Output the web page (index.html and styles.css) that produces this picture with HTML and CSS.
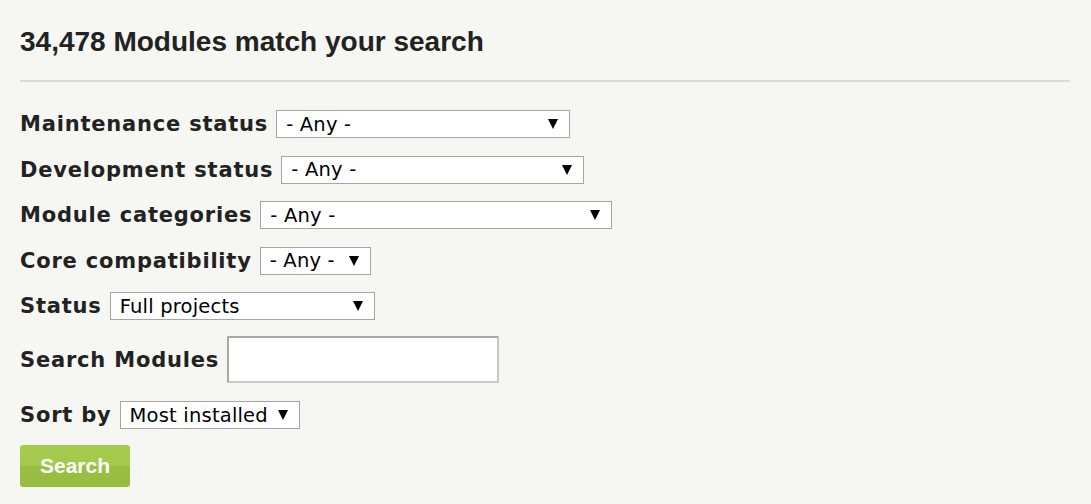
FILE: index.html
```html
<!DOCTYPE html>
<html>
<head>
<meta charset="utf-8">
<link rel="stylesheet" href="styles.css">
</head>
<body>
<div class="page">
  <h2 class="title">34,478 Modules match your search</h2>
  <form class="filters">
    <div class="row">
      <label class="lbl">Maintenance status</label>
      <span class="sel w-maint"><select><option>- Any -</option></select></span>
    </div>
    <div class="row">
      <label class="lbl">Development status</label>
      <span class="sel w-dev"><select><option>- Any -</option></select></span>
    </div>
    <div class="row">
      <label class="lbl">Module categories</label>
      <span class="sel w-cat"><select><option>- Any -</option></select></span>
    </div>
    <div class="row">
      <label class="lbl">Core compatibility</label>
      <span class="sel w-core"><select><option>- Any -</option></select></span>
    </div>
    <div class="row">
      <label class="lbl">Status</label>
      <span class="sel w-status"><select><option>Full projects</option></select></span>
    </div>
    <div class="row row-text">
      <label class="lbl">Search Modules</label>
      <input class="text" type="text">
    </div>
    <div class="row">
      <label class="lbl">Sort by</label>
      <span class="sel w-sort"><select><option>Most installed</option></select></span>
    </div>
    <div class="actions">
      <button class="btn" type="button">Search</button>
    </div>
  </form>
</div>
</body>
</html>
```
FILE: styles.css
```css
html, body {
  margin: 0;
  padding: 0;
  background: #f6f6f2;
}
.page {
  padding: 20px 21px 0 20px;
  font-family: "DejaVu Sans", Verdana, sans-serif;
  color: #222;
}
.title {
  margin: 0;
  padding-top: 8px;
  font-family: "Liberation Sans", Arial, sans-serif;
  font-weight: bold;
  font-size: 28px;
  line-height: 28px;
  color: #222;
  padding-bottom: 24px;
  border-bottom: 2px solid #dddcd5;
}
.filters {
  display: flex;
  flex-direction: column;
  padding-top: 28px;
}
.row {
  display: flex;
  align-items: center;
  gap: 8px;
  height: 28px;
  margin-bottom: 17.5px;
}
.row-text {
  height: 47px;
  margin-top: -1.5px;
  margin-bottom: 18px;
}
.lbl {
  font-weight: bold;
  font-size: 21px;
  letter-spacing: 0.8px;
  color: #222;
  white-space: nowrap;
}
.sel {
  position: relative;
  display: inline-block;
  height: 28px;
}
.sel select {
  appearance: none;
  -webkit-appearance: none;
  width: 100%;
  height: 28px;
  box-sizing: border-box;
  border: 1px solid #a5a5a5;
  border-radius: 0;
  background: #fff;
  font-family: "DejaVu Sans", Verdana, sans-serif;
  font-size: 19.5px;
  letter-spacing: 0.2px;
  color: #000;
  padding: 0 30px 0 9px;
  margin: 0;
}
.sel::after {
  content: "";
  position: absolute;
  right: 12px;
  top: 9px;
  width: 0;
  height: 0;
  border-left: 5px solid transparent;
  border-right: 5px solid transparent;
  border-top: 10px solid #000;
  pointer-events: none;
}
.w-maint { width: 294px; }
.w-dev { width: 303px; }
.w-cat { width: 352px; }
.w-core { width: 111px; }
.w-status { width: 265px; }
.w-sort { width: 180px; }
.text {
  width: 272px;
  height: 47px;
  box-sizing: border-box;
  border: 2px solid #a9aa9f;
  border-right-color: #c8c8c0;
  border-bottom-color: #c8c8c0;
  background: #fff;
  margin: 0;
}
.actions {
  display: flex;
  margin-top: -1.5px;
}
.btn {
  width: 110px;
  height: 42px;
  border: none;
  border-radius: 3px;
  background: linear-gradient(to bottom, #a6cb4e 0%, #a3c94b 50%, #98bf42 51%, #96bd40 100%);
  color: #fff;
  font-family: "Liberation Sans", Arial, sans-serif;
  font-weight: bold;
  font-size: 21px;
  padding: 0;
}
```
